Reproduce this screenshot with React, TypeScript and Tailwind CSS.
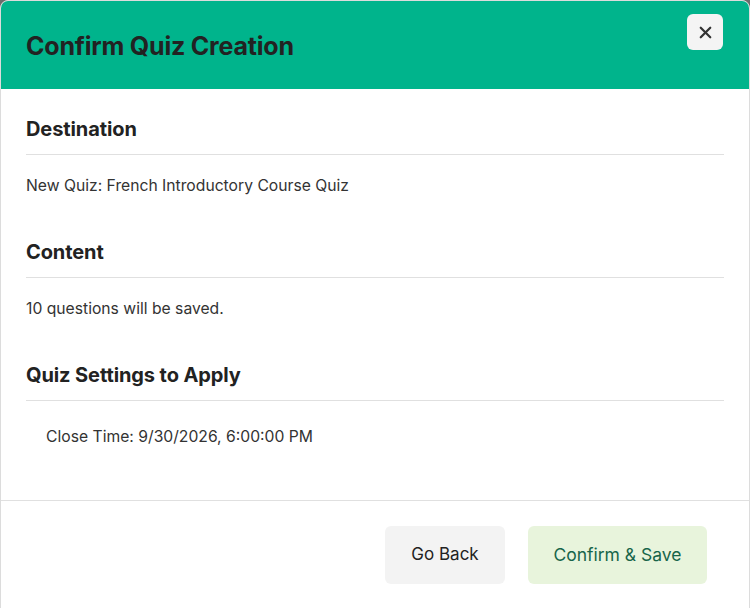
import React from 'react';
import { X } from 'lucide-react';

const Section: React.FC<{ title: string; first?: boolean; children: React.ReactNode }> = ({ title, first, children }) => (
    <div className={first ? '' : 'mt-[42px]'}>
        <h3 className="h-[28px] text-[20px] leading-[28px] font-bold text-[#222] tracking-[-0.1px]">{title}</h3>
        <div className="mt-[11px] border-b border-[#e0e0e0]" />
        {children}
    </div>
);

export default function App() {
    return (
        <div className="w-[750px] h-[608px] bg-[#6b6b6b] overflow-hidden" style={{ fontFamily: 'Inter, "Liberation Sans", sans-serif' }}>
            <div className="w-[750px] h-[616px] bg-white rounded-lg border border-[#dcdcdc] overflow-hidden flex flex-col">
                <div className="h-[88px] shrink-0 bg-[#00b48c] flex items-start justify-between pl-[25px] pr-[25px]">
                    <h2 className="mt-[29px] text-[25px] leading-[32px] font-bold text-[#222] tracking-[-0.2px]">Confirm Quiz Creation</h2>
                    <button className="mt-[13px] mr-[1px] w-[36px] h-[36px] rounded-md bg-[#f4f4f4] flex items-center justify-center text-[#333]">
                        <X className="w-[19px] h-[19px]" strokeWidth={2.8} />
                    </button>
                </div>

                <div className="px-[25px] pt-[26px] h-[412px] shrink-0 border-b border-[#e0e0e0]">
                    <Section title="Destination" first>
                        <p className="mt-[21px] text-[15.7px] leading-[20px] text-[#333]">New Quiz: French Introductory Course Quiz</p>
                    </Section>
                    <Section title="Content">
                        <p className="mt-[21px] text-[15.7px] leading-[20px] text-[#333]">10 questions will be saved.</p>
                    </Section>
                    <Section title="Quiz Settings to Apply">
                        <ul className="mt-[26px] pl-[20px]">
                            <li className="text-[15.7px] leading-[20px] text-[#333]">Close Time: 9/30/2026, 6:00:00 PM</li>
                        </ul>
                    </Section>
                </div>

                <div className="flex justify-end gap-[23px] pt-[25px] pr-[42px]">
                    <button className="w-[120px] h-[58px] rounded-md bg-[#f3f3f3] text-[17px] text-[#222]">Go Back</button>
                    <button className="w-[179px] h-[58px] rounded-md bg-[#e8f4dc] text-[17.5px] text-[#17654a]">Confirm &amp; Save</button>
                </div>
            </div>
        </div>
    );
}
